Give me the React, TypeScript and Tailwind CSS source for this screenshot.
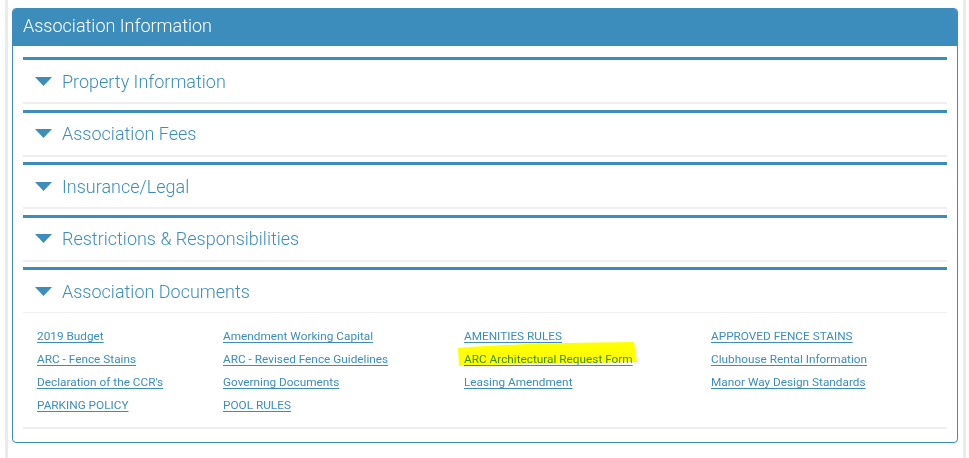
import React from 'react';

const sections = [
  'Property Information',
  'Association Fees',
  'Insurance/Legal',
  'Restrictions & Responsibilities',
];

const docs: string[][] = [
  ['2019 Budget', 'Amendment Working Capital', 'AMENITIES RULES', 'APPROVED FENCE STAINS'],
  ['ARC - Fence Stains', 'ARC - Revised Fence Guidelines', 'ARC Architectural Request Form', 'Clubhouse Rental Information'],
  ["Declaration of the CCR's", 'Governing Documents', 'Leasing Amendment', 'Manor Way Design Standards'],
  ['PARKING POLICY', 'POOL RULES', '', ''],
];

function Caret() {
  return (
    <svg width="17" height="9" viewBox="0 0 17 9" className="shrink-0">
      <path d="M0 0 H17 L8.5 9 Z" fill="#3c8dbc" />
    </svg>
  );
}

function SectionHead({ title }: { title: string }) {
  return (
    <div className="flex items-center h-[42.25px] pl-[12px] gap-[10px]">
      <Caret />
      <span className="text-[18px] text-[#3c8dbc] font-light">{title}</span>
    </div>
  );
}

function DocLink({ label }: { label: string }) {
  if (!label) return <span />;
  const marked = label === 'ARC Architectural Request Form';
  return (
    <span className="relative inline-block">
      <a href="#" className="text-[11.8px] text-[#3c8dbc] underline underline-offset-2">
        {label}
      </a>
      {marked && (
        <svg
          className="absolute left-[-8px] top-[-4px] mix-blend-multiply pointer-events-none"
          width="182"
          height="25"
          viewBox="0 0 182 25"
        >
          <path d="M2 6 Q60 1 178 0 L181 20 Q90 21 3 24 Z" fill="#ffff00" />
        </svg>
      )}
    </span>
  );
}

export default function App() {
  return (
    <div className="w-[969px] h-[458px] bg-white pl-[5px] font-['Roboto',sans-serif]">
      <div className="w-[961px] h-full border-x-[3px] border-[#ebebeb] px-[4px] pt-[8px]">
        <div className="w-[946px] border border-[#3c8dbc] rounded-[4px] overflow-hidden">
          <div className="bg-[#3c8dbc] h-[37px] flex items-center px-[10px] pb-[5px]">
            <h3 className="text-white text-[18px] font-light">Association Information</h3>
          </div>
          <div className="p-[10px] pt-[11px] pb-[13px]">
            {sections.map((s) => (
              <div key={s} className="border-t-[3px] border-[#3c8dbc] border-b-2 border-b-[#efefef] mb-[5.25px]">
                <SectionHead title={s} />
              </div>
            ))}
            <div className="border-t-[3px] border-[#3c8dbc] border-b-2 border-b-[#efefef]">
              <div className="border-b border-[#f0f0f0]">
                <SectionHead title="Association Documents" />
              </div>
              <div className="pl-[14px] pt-[10px] pb-[12px]">
                {docs.map((row, i) => (
                  <div key={i} className="grid grid-cols-[186px_241px_247px_1fr] h-[23px]">
                    {row.map((d, j) => (
                      <DocLink key={j} label={d} />
                    ))}
                  </div>
                ))}
              </div>
            </div>
          </div>
        </div>
      </div>
    </div>
  );
}
